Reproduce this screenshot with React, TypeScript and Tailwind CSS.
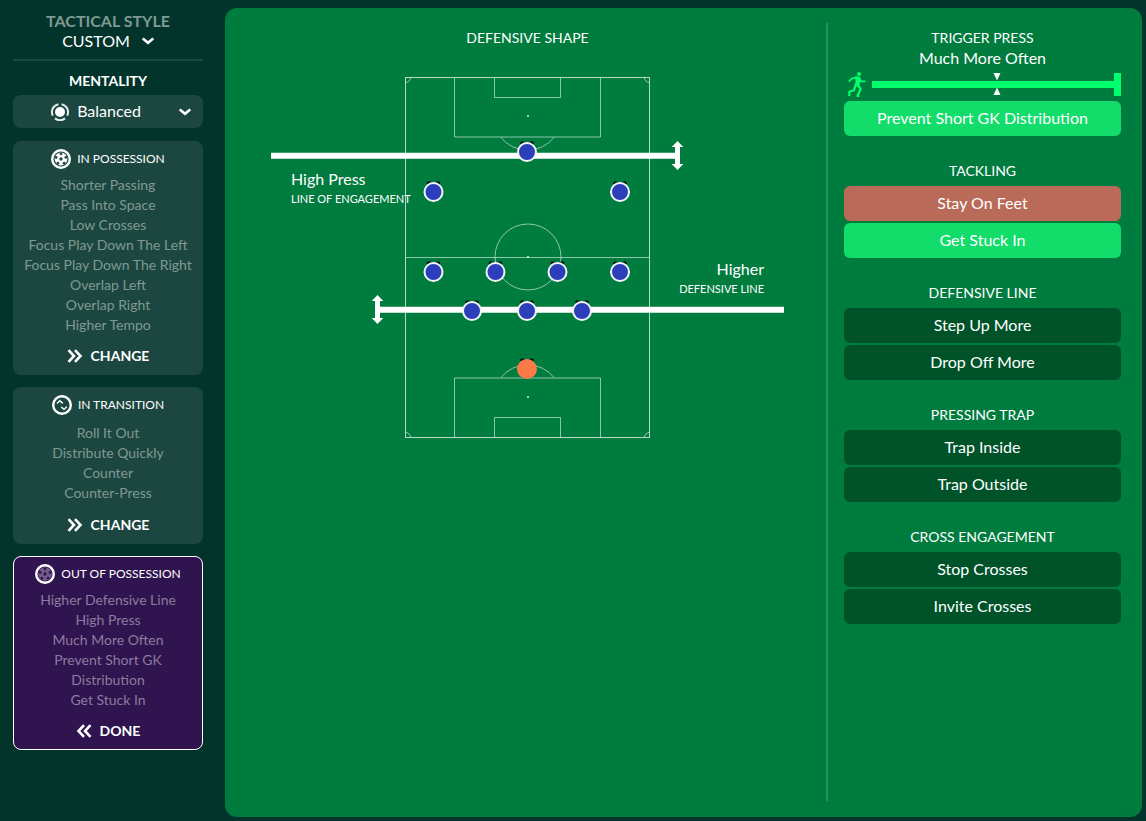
// App.tsx
import { useState } from 'react';
import type { ReactNode } from 'react';
import clsx from 'clsx';

interface Phase {
  id: string;
  title: string;
  icon: ReactNode;
  items: string[];
  active?: boolean;
}

type Tone = 'on' | 'off' | 'conflict';

interface Option {
  label: string;
  tone: Tone;
}

interface OptionGroup {
  title: string;
  options: Option[];
}

const Chevron = ({ className }: { className?: string }) => (
  <svg className={clsx('pointer-events-none w-3 h-2', className)} fill="none" stroke="currentColor" viewBox="0 0 12 8">
    <path strokeWidth={2.6} d="M.8 1.4L6 5.8l5.2-4.4" />
  </svg>
);

const DoubleChevron = ({ flip }: { flip?: boolean }) => (
  <svg className={clsx('w-4 h-3.5', flip && 'rotate-180')} fill="none" stroke="currentColor" viewBox="0 0 16 14">
    <path strokeWidth={2.6} d="M1.5 1.2L7 7l-5.5 5.8M8 1.2L13.5 7 8 12.8" />
  </svg>
);

const BallIcon = ({ dim }: { dim?: boolean }) => (
  <svg className="w-5 h-5" viewBox="0 0 20 20" fill="none">
    <circle cx="10" cy="10" r="8.8" stroke="#fff" strokeWidth={2.4} />
    <circle cx="10" cy="10" r={dim ? 6.8 : 6.4} fill={dim ? '#745c88' : '#fff'} />
    <g fill={dim ? '#301450' : '#1c4740'}>
      <path d="M10 8.1l1.8 1.3-.7 2.2H8.9l-.7-2.2z" />
      <circle cx="10" cy="4.8" r="1.4" />
      <circle cx="14.9" cy="8.4" r="1.4" />
      <circle cx="13.1" cy="14.2" r="1.4" />
      <circle cx="6.9" cy="14.2" r="1.4" />
      <circle cx="5.1" cy="8.4" r="1.4" />
    </g>
  </svg>
);

const TransitionIcon = () => (
  <svg className="w-5 h-5" viewBox="0 0 20 20" fill="none" stroke="#fff">
    <circle cx="10" cy="10" r="8.8" strokeWidth={2.4} />
    <path strokeWidth={1.4} d="M5 8.4l2.8-2.6 3 2.6M9.2 12l2.8 2.4 2.8-2.6" />
  </svg>
);

const BalancedIcon = () => (
  <svg className="w-[18px] h-[18px]" viewBox="0 0 18 18" fill="none">
    <circle cx="9" cy="9" r="5" fill="#fff" />
    <g stroke="#e4eae8" strokeWidth={2}>
      <path d="M7.4 1.2A8 8 0 001.8 12.6M10.6 1.2A8 8 0 0116.2 12.6M4 15.4a8 8 0 0010 0" />
    </g>
  </svg>
);

const RunnerIcon = () => (
  <svg className="w-[18px] h-[25px] shrink-0" viewBox="0 0 18 25" fill="none" stroke="currentColor" strokeLinejoin="round">
    <circle cx="11" cy="2" r="2" fill="currentColor" stroke="none" />
    <path fill="currentColor" stroke="none" d="M6.8 4.2l5.2.6.4 3.6-1.2 6-4.8-.4 1.3-5z" />
    <path strokeWidth={1.7} d="M9 5.2L3.6 6.6.8 9.6M11.2 5.6L13 9.4h4.4" />
    <path strokeWidth={2.2} d="M9.6 13l3 3.8-3 7.2h1.8M7.6 13.4L6 18.2l-4.6 1.6L1.2 24" />
  </svg>
);

const phases: Phase[] = [
  {
    id: 'in-possession',
    title: 'IN POSSESSION',
    icon: <BallIcon />,
    items: [
      'Shorter Passing',
      'Pass Into Space',
      'Low Crosses',
      'Focus Play Down The Left',
      'Focus Play Down The Right',
      'Overlap Left',
      'Overlap Right',
      'Higher Tempo',
    ],
  },
  {
    id: 'in-transition',
    title: 'IN TRANSITION',
    icon: <TransitionIcon />,
    items: ['Roll It Out', 'Distribute Quickly', 'Counter', 'Counter-Press'],
  },
  {
    id: 'out-of-possession',
    title: 'OUT OF POSSESSION',
    icon: <BallIcon dim />,
    items: [
      'Higher Defensive Line',
      'High Press',
      'Much More Often',
      'Prevent Short GK Distribution',
      'Get Stuck In',
    ],
    active: true,
  },
];

const optionGroups: OptionGroup[] = [
  {
    title: 'TACKLING',
    options: [
      { label: 'Stay On Feet', tone: 'conflict' },
      { label: 'Get Stuck In', tone: 'on' },
    ],
  },
  {
    title: 'DEFENSIVE LINE',
    options: [
      { label: 'Step Up More', tone: 'off' },
      { label: 'Drop Off More', tone: 'off' },
    ],
  },
  {
    title: 'PRESSING TRAP',
    options: [
      { label: 'Trap Inside', tone: 'off' },
      { label: 'Trap Outside', tone: 'off' },
    ],
  },
  {
    title: 'CROSS ENGAGEMENT',
    options: [
      { label: 'Stop Crosses', tone: 'off' },
      { label: 'Invite Crosses', tone: 'off' },
    ],
  },
];

const pressLevels = ['Much Less Often', 'Less Often', 'Standard', 'More Often', 'Much More Often'];

const outfield = [
  [256, 78],
  [162.5, 118],
  [349, 118],
  [162.5, 198],
  [224.5, 198],
  [286.5, 198],
  [349, 198],
  [201, 237],
  [256, 237],
  [311, 237],
];

function PhaseCard({ phase }: { phase: Phase }) {
  return (
    <section
      className={clsx(
        'flex flex-col items-center min-h-[157px] px-2 pt-2 pb-[9px] rounded-lg',
        phase.active ? 'bg-[#301450] outline outline-1 -outline-offset-1 outline-white' : 'bg-[#1c4740]'
      )}
    >
      <h2 className="flex items-center gap-1.5 h-5 text-xs">
        {phase.icon}
        {phase.title}
      </h2>
      <ul
        className={clsx(
          'flex-1 flex flex-col justify-center mt-1.5 text-center text-sm leading-5',
          phase.active ? 'text-[#8d7b9d]' : 'text-[#7f9993]'
        )}
      >
        {phase.items.map((item) => (
          <li key={item}>{item}</li>
        ))}
      </ul>
      <button type="button" className="flex items-center gap-2 h-5 mt-[11px] text-sm font-bold">
        <DoubleChevron flip={phase.active} />
        {phase.active ? 'DONE' : 'CHANGE'}
      </button>
    </section>
  );
}

function OptionButton({ option }: { option: Option }) {
  return (
    <button
      type="button"
      aria-pressed={option.tone === 'on'}
      className={clsx(
        'h-[35px] w-full pb-0.5 rounded-md text-base',
        option.tone === 'on' && 'bg-[#12dc6a]',
        option.tone === 'off' && 'bg-[#005329]',
        option.tone === 'conflict' && 'bg-[#b96a58]'
      )}
    >
      {option.label}
    </button>
  );
}

function Player({ x, y, keeper }: { x: number; y: number; keeper?: boolean }) {
  return (
    <g>
      <ellipse cx={x - 4.5} cy={y - 9} rx="2.4" ry="1.8" fill="#06170f" />
      <ellipse cx={x + 4.5} cy={y - 9} rx="2.4" ry="1.8" fill="#06170f" />
      <circle cx={x} cy={y} r="9" fill={keeper ? '#fa7a48' : '#2b3fba'} stroke={keeper ? '#fa7a48' : '#f4f4f8'} strokeWidth={2} />
    </g>
  );
}

function Pitch() {
  return (
    <svg className="w-full" viewBox="0 0 513 366" fill="none">
      {/* Markings */}
      <g stroke="#fff" strokeOpacity={0.55}>
        <rect x="134.5" y="3.5" width="244" height="360" strokeOpacity={0.7} />
        <path d="M134.5 183.5h244M183.5 3.5v59.5h146V3.5M223.5 3.5v20h66v-20M183.5 363.5V304h146v59.5M223.5 363.5v-20h66v20" />
        <circle cx="257" cy="183" r="33" />
        <path d="M230 63.5a34 34 0 0053 0M230 303.5a34 34 0 0153 0" />
        <path d="M134.5 8.5a5 5 0 005-5M373.5 3.5a5 5 0 005 5M134.5 358.5a5 5 0 015 5M373.5 363.5a5 5 0 015-5" />
      </g>
      <g fill="#fff" fillOpacity={0.65}>
        <rect x="256" y="41" width="2" height="2" />
        <rect x="256" y="182" width="2" height="2" />
        <rect x="256" y="322" width="2" height="2" />
      </g>

      {/* Line of engagement and defensive line with their drag handles */}
      <g fill="#fff">
        <path d="M0 78.7h404v6H0zM106 232.7h407v6H106z" />
        <path d="M406.5 67l5.8 6h-3.3v17h3.3l-5.8 6-5.8-6h3.3V73h-3.3z" />
        <path d="M106.5 221l5.8 6h-3.3v17h3.3l-5.8 6-5.8-6h3.3v-17h-3.3z" />
      </g>

      {outfield.map(([x, y]) => (
        <Player key={`${x}-${y}`} x={x} y={y} />
      ))}
      <Player x={256} y={295} keeper />
    </svg>
  );
}

export default function App() {
  const [press, setPress] = useState(4);

  return (
    <div className="flex min-h-screen bg-[#02342c] text-white font-[Lato,'Liberation_Sans',sans-serif]">
      {/* Sidebar */}
      <aside className="flex flex-col shrink-0 w-[225px] pt-[11px] pl-[13px] pr-[22px]">
        <div className="flex flex-col items-center pb-2 border-b-2 border-[#1c4740]">
          <label htmlFor="style" className="text-base leading-5 font-bold text-[#7f9993]">
            TACTICAL STYLE
          </label>
          <div className="flex items-center gap-3 text-base leading-5">
            <select id="style" className="appearance-none field-sizing-content bg-transparent outline-none">
              <option>CUSTOM</option>
            </select>
            <Chevron />
          </div>
        </div>

        <label htmlFor="mentality" className="mt-2.5 text-center text-sm leading-5 font-bold">
          MENTALITY
        </label>
        <div className="relative flex items-center justify-center gap-2 h-[33px] mt-1 pr-6 rounded-lg bg-[#1c4740]">
          <BalancedIcon />
          <select id="mentality" className="appearance-none field-sizing-content pb-0.5 bg-transparent outline-none text-base leading-5">
            <option>Balanced</option>
          </select>
          <Chevron className="absolute right-3" />
        </div>

        <div className="flex flex-col gap-3 mt-[13px]">
          {phases.map((phase) => (
            <PhaseCard key={phase.id} phase={phase} />
          ))}
        </div>
      </aside>

      <main className="flex flex-1 mt-2 mr-1 mb-1 pt-[15px] pb-4 rounded-xl bg-[#007c3e]">
        {/* Defensive shape */}
        <section className="flex-1 flex flex-col items-center pl-1 pt-[5px]">
          <h1 className="text-sm leading-5">DEFENSIVE SHAPE</h1>
          <div className="relative w-full max-w-[513px] mt-[26px]">
            <Pitch />
            <div className="absolute left-5 top-[95px]">
              <p className="text-base leading-5">High Press</p>
              <p className="text-[11px] leading-5">LINE OF ENGAGEMENT</p>
            </div>
            <div className="absolute right-5 top-[185px] text-right">
              <p className="text-base leading-5">Higher</p>
              <p className="text-[11px] leading-5">DEFENSIVE LINE</p>
            </div>
          </div>
        </section>

        {/* Instructions */}
        <section className="flex flex-col gap-[25px] w-[316px] pt-[5px] pl-4 pr-[21px] border-l-2 border-[#2a9158]">
          <div className="flex flex-col">
            <label htmlFor="press" className="text-center text-sm leading-5">
              TRIGGER PRESS
            </label>
            <p className="text-center text-base leading-5">{pressLevels[press]}</p>
            <div className="flex items-center gap-1.5 h-8 mb-px pl-1 text-[#00ff6c]">
              <RunnerIcon />
              <div className="relative flex items-center flex-1 h-6">
                <input
                  id="press"
                  type="range"
                  min={0}
                  max={4}
                  value={press}
                  onChange={(e) => setPress(Number(e.target.value))}
                  className="appearance-none w-full h-6 bg-transparent outline-none [&::-webkit-slider-runnable-track]:h-[7px] [&::-webkit-slider-runnable-track]:bg-[#00ff6c] [&::-webkit-slider-thumb]:appearance-none [&::-webkit-slider-thumb]:w-[7px] [&::-webkit-slider-thumb]:h-[23px] [&::-webkit-slider-thumb]:-mt-2 [&::-webkit-slider-thumb]:bg-[#00ff6c]"
                />
                {/* Default position marker */}
                <svg className="absolute inset-0 m-auto w-2 h-6 pointer-events-none" viewBox="0 0 8 24" fill="#fff">
                  <path d="M.5 1h7L4 8.5zM.5 23h7L4 15.5z" />
                </svg>
              </div>
            </div>
            <OptionButton option={{ label: 'Prevent Short GK Distribution', tone: 'on' }} />
          </div>

          {optionGroups.map((group) => (
            <div key={group.title} className="flex flex-col">
              <h2 className="mb-[5px] text-center text-sm leading-5">{group.title}</h2>
              <div className="flex flex-col gap-0.5">
                {group.options.map((option) => (
                  <OptionButton key={option.label} option={option} />
                ))}
              </div>
            </div>
          ))}
        </section>
      </main>
    </div>
  );
}
